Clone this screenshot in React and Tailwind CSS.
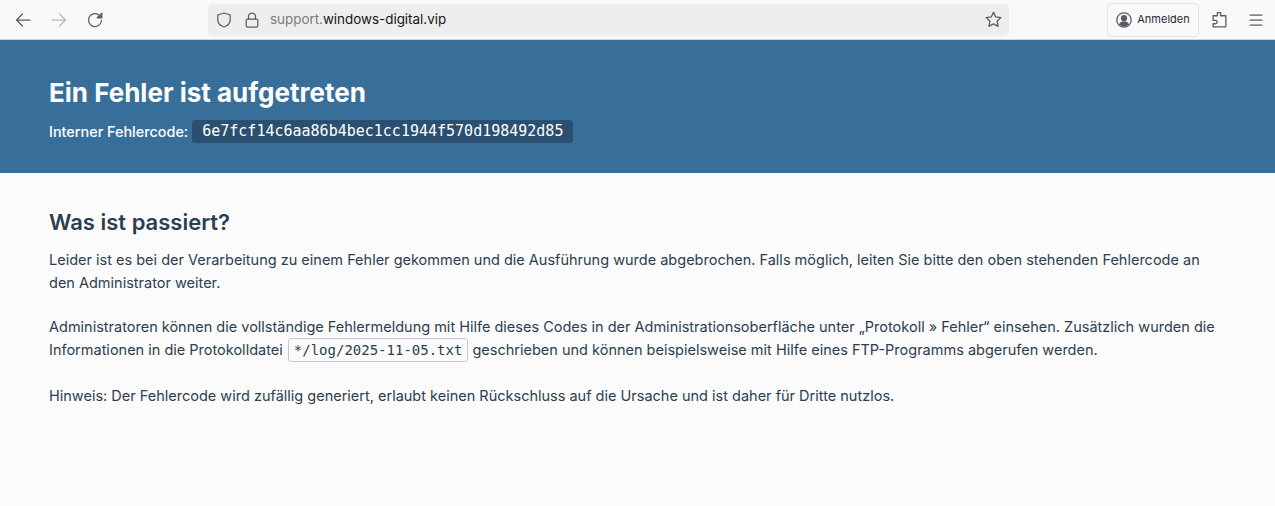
function Icon({ className, children }) {
  return (
    <svg viewBox="0 0 16 16" fill="none" stroke="currentColor" strokeWidth="1.25" strokeLinecap="round" strokeLinejoin="round" className={className}>
      {children}
    </svg>
  );
}

function Toolbar() {
  return (
    <div className="h-10 flex items-center bg-[#f9f9fa] border-b border-[#d5d5d8] font-['Inter',sans-serif]">
      <div className="w-[208px] flex items-center pl-[15px] gap-[20px] text-[#5b5b66]">
        <Icon className="w-4 h-4">
          <path d="M15 8H1.5M7.5 2L1.5 8l6 6" />
        </Icon>
        <Icon className="w-4 h-4 text-[#b8b8bd]">
          <path d="M1 8h13.5M8.5 2l6 6-6 6" />
        </Icon>
        <Icon className="w-4 h-4">
          <path d="M14.5 8.5A6.5 6.5 0 1 1 11.5 2.6" />
          <path d="M14.8 1.2v4.6h-4.6z" fill="currentColor" />
        </Icon>
      </div>
      <div className="w-[801px] h-8 rounded-[5px] bg-[#eeeeef] flex items-center pl-[8px] pr-[7px] text-[#5b5b66]">
        <Icon className="w-4 h-4">
          <path d="M8 1l6.2 2v5c0 3.4-2.6 5.8-6.2 7-3.6-1.2-6.2-3.6-6.2-7V3z" />
        </Icon>
        <Icon className="w-4 h-4 ml-[12px]">
          <rect x="2.2" y="7" width="11.6" height="8" rx="1.2" />
          <path d="M4.5 7V4.5a3.5 3.5 0 0 1 7 0V7" />
        </Icon>
        <span className="ml-[10px] text-[13.4px] text-[#7a7a82]">
          support.<span className="text-[#15141a]">windows-digital.vip</span>
        </span>
        <Icon className="w-[17px] h-[17px] ml-auto">
          <path d="M8 1.2l2.1 4.4 4.8.6-3.5 3.4.9 4.8L8 12.1l-4.3 2.3.9-4.8L1.1 6.2l4.8-.6z" />
        </Icon>
      </div>
      <div className="ml-[98px] h-[34px] w-[92px] border border-[#e3e3e6] rounded-[4px] flex items-center justify-center gap-[5px] text-[#2b2a33]">
        <Icon className="w-4 h-4 text-[#5b5b66]">
          <circle cx="8" cy="8" r="7.2" />
          <circle cx="8" cy="6.2" r="2.5" fill="currentColor" />
          <path d="M3.8 12.2c.6-1.6 2.2-2.3 4.2-2.3s3.6.7 4.2 2.3C11 13.4 9.6 14 8 14s-3-.6-4.2-1.8z" fill="currentColor" />
        </Icon>
        <span className="text-[11px]">Anmelden</span>
      </div>
      <Icon className="w-[17px] h-[17px] ml-[12px] text-[#5b5b66]">
        <path d="M6 1.5h3v3h5v9.5a1 1 0 0 1-1 1H2v-3h2.2a1.6 1.6 0 0 0 0-3.2H2V4.5h4z" />
      </Icon>
      <Icon className="w-4 h-4 ml-[20px] text-[#5b5b66]">
        <path d="M2 3h12M2 8h12M2 13h12" />
      </Icon>
    </div>
  );
}

export default function App() {
  return (
    <div className="h-[506px] overflow-hidden bg-[#fbfbfb] font-['Inter',sans-serif] text-[14.5px] leading-[23px] text-[#2c3e50]">
      <Toolbar />
      <header className="h-[133px] bg-[#386f9a] px-[49px] pt-[37px] text-white">
        <h1 className="text-[26px] leading-[32px] font-bold">Ein Fehler ist aufgetreten</h1>
        <div className="mt-[11px] flex items-center text-[14.4px] font-medium">
          Interner Fehlercode:
          <code className="ml-[4px] h-[23px] px-[10px] rounded-[3px] bg-[#2b4f70] font-['DejaVu_Sans_Mono',monospace] text-[15px] leading-[23px] font-normal">
            6e7fcf14c6aa86b4bec1cc1944f570d198492d85
          </code>
        </div>
      </header>
      <main className="px-[49px] pt-[35px]">
        <h2 className="text-[22px] leading-[28px] font-semibold">Was ist passiert?</h2>
        <p className="mt-[12px]">
          Leider ist es bei der Verarbeitung zu einem Fehler gekommen und die Ausführung wurde abgebrochen. Falls möglich, leiten Sie bitte den oben stehenden Fehlercode an den Administrator weiter.
        </p>
        <p className="mt-[22px] leading-[22.5px]">
          Administratoren können die vollständige Fehlermeldung mit Hilfe dieses Codes in der Administrationsoberfläche unter „Protokoll » Fehler“ einsehen. Zusätzlich wurden die Informationen in die Protokolldatei{" "}
          <code className="ml-[1px] px-[5px] py-[3px] border border-[#c5c9cd] rounded-[3px] font-['DejaVu_Sans_Mono',monospace] text-[14px]">*/log/2025-11-05.txt</code>{" "}
          geschrieben und können beispielsweise mit Hilfe eines FTP-Programms abgerufen werden.
        </p>
        <p className="mt-[23px]">
          Hinweis: Der Fehlercode wird zufällig generiert, erlaubt keinen Rückschluss auf die Ursache und ist daher für Dritte nutzlos.
        </p>
      </main>
    </div>
  );
}
